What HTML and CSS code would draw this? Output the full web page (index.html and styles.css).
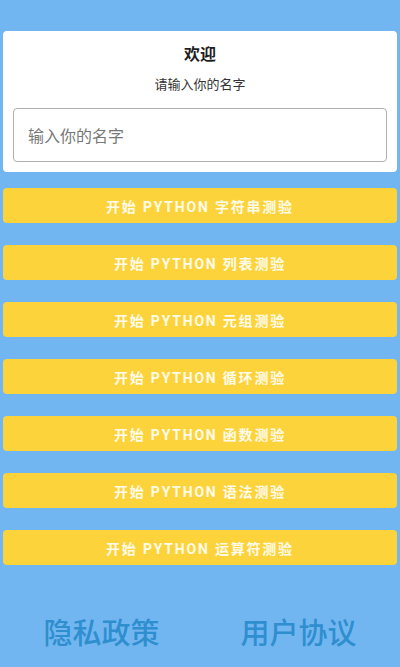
FILE: index.html
```html
<!DOCTYPE html>
<html lang="zh">
<head>
<meta charset="utf-8">
<meta name="viewport" content="width=device-width, initial-scale=1">
<link rel="stylesheet" href="styles.css">
<title>Python 测验</title>
</head>
<body>
<div class="page">
  <section class="card">
    <h1 class="title">欢迎</h1>
    <p class="subtitle">请输入你的名字</p>
    <input class="name-input" type="text" placeholder="输入你的名字">
  </section>
  <div class="buttons">
    <button class="quiz-btn">开始 PYTHON 字符串测验</button>
    <button class="quiz-btn">开始 PYTHON 列表测验</button>
    <button class="quiz-btn">开始 PYTHON 元组测验</button>
    <button class="quiz-btn">开始 PYTHON 循环测验</button>
    <button class="quiz-btn">开始 PYTHON 函数测验</button>
    <button class="quiz-btn">开始 PYTHON 语法测验</button>
    <button class="quiz-btn">开始 PYTHON 运算符测验</button>
  </div>
  <footer class="footer">
    <a class="footer-link">隐私政策</a>
    <a class="footer-link">用户协议</a>
  </footer>
</div>
</body>
</html>
```

FILE: styles.css
```css
html, body {
  margin: 0;
  padding: 0;
  background: #71b6f1;
  font-family: Roboto, "Noto Sans CJK SC", sans-serif;
}
.page {
  width: 400px;
  height: 667px;
  box-sizing: border-box;
  padding: 31px 3px 0;
  display: flex;
  flex-direction: column;
}
.card {
  background: #fff;
  border-radius: 4px;
  padding: 12px 10px 10px;
  display: flex;
  flex-direction: column;
  align-items: center;
}
.title {
  margin: 0;
  font-size: 16px;
  line-height: 24px;
  font-weight: 700;
  color: #1e1e1e;
}
.subtitle {
  margin: 9px 0 15px;
  font-size: 13px;
  line-height: 17px;
  color: #333;
}
.name-input {
  width: 100%;
  box-sizing: border-box;
  height: 54px;
  border: 1.5px solid #b0b0b0;
  border-radius: 4px;
  padding: 0 14px;
  font-family: "Noto Sans CJK SC", sans-serif;
  font-size: 16px;
  color: #333;
  outline: none;
}
.name-input::placeholder {
  color: #777;
}
.buttons {
  margin-top: 16px;
  display: flex;
  flex-direction: column;
  gap: 22px;
}
.quiz-btn {
  height: 35px;
  border: none;
  border-radius: 4px;
  background: #fdd33b;
  color: #fffbea;
  font-family: Roboto, "Noto Sans CJK SC", sans-serif;
  font-weight: 700;
  font-size: 14px;
  letter-spacing: 1.8px;
  padding: 0;
}
.footer {
  flex: 1;
  display: flex;
  align-items: center;
  padding-top: 30px;
}
.footer-link {
  flex: 1;
  text-align: center;
  font-family: "Noto Sans CJK SC", sans-serif;
  font-size: 29px;
  font-weight: 500;
  color: #2f8ece;
}
```
